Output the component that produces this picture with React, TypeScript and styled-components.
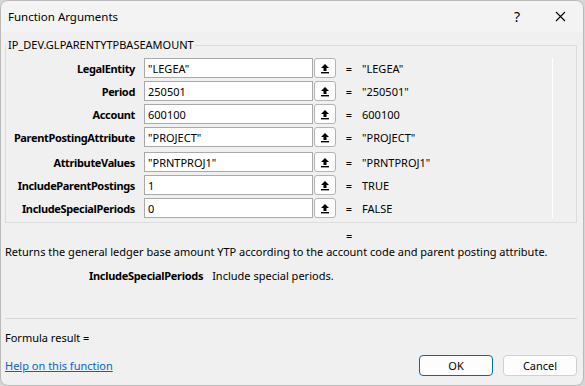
import React from 'react'
import styled, { createGlobalStyle } from 'styled-components'

const GlobalStyle = createGlobalStyle`
  body {
    margin: 0;
    background: #d6d6d6;
    font-family: "Noto Sans", "Liberation Sans", sans-serif;
    font-size: 11px;
    color: #000;
  }
`

const Dialog = styled.div`
  width: 584px;
  height: 386px;
  box-sizing: border-box;
  background: #f0f0f0;
  border: 1px solid #b9b9b9;
  border-radius: 8px;
  overflow: hidden;
  display: flex;
  flex-direction: column;
`

const TitleBar = styled.div`
  height: 31px;
  display: flex;
  align-items: center;
  padding-left: 7px;
  background: #f3f3f3;
`

const Title = styled.div`
  flex: 1;
  font-size: 11.5px;
`

const TitleButton = styled.div<{ $width: number }>`
  width: ${(p) => p.$width}px;
  height: 31px;
  display: flex;
  align-items: center;
  justify-content: center;
  font-size: 14px;
`

const Body = styled.div`
  flex: 1;
  display: flex;
  flex-direction: column;
  padding: 0 6px 0 4px;
`

const Group = styled.fieldset`
  margin: 5px 0 0 0;
  padding: 5px 0 4px 0;
  border: 1px solid #dcdcdc;
  display: flex;
`

const Legend = styled.legend`
  padding: 0 1px 0 2px;
  margin-left: 0;
  line-height: 16px;
`

const Rows = styled.div`
  flex: 1;
  display: flex;
  flex-direction: column;
  gap: 3px;
`

const Track = styled.div`
  width: 1px;
  background: #ffffff;
  margin: 0 23px 0 0;
`

const Row = styled.div<{ $extra?: number }>`
  display: flex;
  align-items: center;
  height: 20px;
  margin-top: ${(p) => p.$extra || 0}px;
`

const Label = styled.div`
  width: 129px;
  text-align: right;
  font-weight: bold;
  letter-spacing: -0.35px;
  white-space: nowrap;
  margin-right: 9px;
`

const Input = styled.div`
  width: 169px;
  height: 20px;
  box-sizing: border-box;
  background: #fff;
  border: 1px solid #a9a9a9;
  padding: 0 3px;
  display: flex;
  align-items: center;
  white-space: nowrap;
`

const RefButton = styled.div`
  width: 22px;
  height: 20px;
  box-sizing: border-box;
  margin-left: 1px;
  background: #fdfdfd;
  border: 1px solid #b3b3b3;
  border-radius: 3px;
  display: flex;
  align-items: center;
  justify-content: center;
`

const Equals = styled.div`
  width: 26px;
  text-align: center;
`

const Value = styled.div`
  white-space: nowrap;
`

const ResultEquals = styled.div`
  margin: 5px 0 0 341px;
  line-height: 16px;
`

const Description = styled.div`
  line-height: 16px;
  white-space: nowrap;
`

const ArgHelp = styled.div`
  margin-top: 8px;
  padding-left: 84px;
  line-height: 16px;
  display: flex;
  gap: 9px;
`

const ArgName = styled.span`
  font-weight: bold;
  letter-spacing: -0.3px;
`

const Separator = styled.div`
  margin-top: auto;
  height: 1px;
  background: #d9d9d9;
`

const ResultLine = styled.div`
  margin-top: 11px;
  line-height: 16px;
`

const Footer = styled.div`
  display: flex;
  align-items: center;
  height: 21px;
  margin: 9px 0 9px 0;
`

const HelpLink = styled.a`
  flex: 1;
  color: #0066cc;
  text-decoration: underline;
  cursor: pointer;
`

const Button = styled.button<{ $primary?: boolean }>`
  width: 74px;
  height: 21px;
  margin-left: 10px;
  box-sizing: border-box;
  font: inherit;
  background: #fdfdfd;
  border: 1px solid ${(p) => (p.$primary ? '#0067c0' : '#d0d0d0')};
  border-radius: 4px;
  padding: 0;
  color: #000;
`

const UploadIcon = () => (
  <svg width="10" height="11" viewBox="0 0 10 11">
    <path d="M5 1 L1 5 H3.5 V8 H6.5 V5 H9 Z" fill="#000" />
    <rect x="1" y="9" width="8" height="1.4" fill="#000" />
  </svg>
)

const CloseIcon = () => (
  <svg width="11" height="11" viewBox="0 0 11 11">
    <path d="M1 1 L10 10 M10 1 L1 10" stroke="#000" strokeWidth="1.1" />
  </svg>
)

const args = [
  { name: 'LegalEntity', input: '"LEGEA"', value: '"LEGEA"' },
  { name: 'Period', input: '250501', value: '"250501"' },
  { name: 'Account', input: '600100', value: '600100' },
  { name: 'ParentPostingAttribute', input: '"PROJECT"', value: '"PROJECT"' },
  { name: 'AttributeValues', input: '"PRNTPROJ1"', value: '"PRNTPROJ1"', extra: 2 },
  { name: 'IncludeParentPostings', input: '1', value: 'TRUE' },
  { name: 'IncludeSpecialPeriods', input: '0', value: 'FALSE' },
]

const App: React.FC = () => (
  <>
    <GlobalStyle />
    <Dialog>
      <TitleBar>
        <Title>Function Arguments</Title>
        <TitleButton $width={40}>?</TitleButton>
        <TitleButton $width={46}>
          <CloseIcon />
        </TitleButton>
      </TitleBar>
      <Body>
        <Group>
          <Legend>IP_DEV.GLPARENTYTPBASEAMOUNT</Legend>
          <Rows>
            {args.map((a) => (
              <Row key={a.name} $extra={a.extra}>
                <Label>{a.name}</Label>
                <Input>{a.input}</Input>
                <RefButton>
                  <UploadIcon />
                </RefButton>
                <Equals>=</Equals>
                <Value>{a.value}</Value>
              </Row>
            ))}
          </Rows>
          <Track />
        </Group>
        <ResultEquals>=</ResultEquals>
        <Description>
          Returns the general ledger base amount YTP according to the account code and parent posting attribute.
        </Description>
        <ArgHelp>
          <ArgName>IncludeSpecialPeriods</ArgName>
          <span>Include special periods.</span>
        </ArgHelp>
        <Separator />
        <ResultLine>Formula result =</ResultLine>
        <Footer>
          <HelpLink>Help on this function</HelpLink>
          <Button $primary>OK</Button>
          <Button>Cancel</Button>
        </Footer>
      </Body>
    </Dialog>
  </>
)

export default App
